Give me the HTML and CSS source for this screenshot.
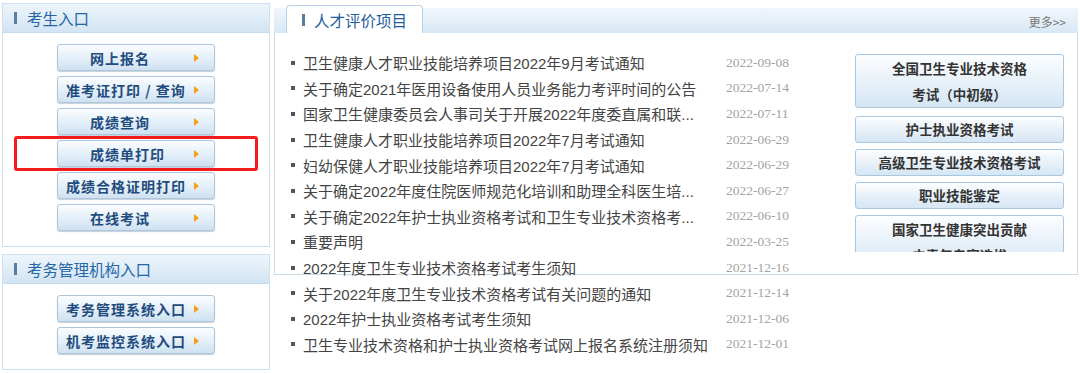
FILE: index.html
```html
<!DOCTYPE html>
<html lang="zh-CN">
<head>
<meta charset="utf-8">
<title>人才评价项目</title>
<link rel="stylesheet" href="styles.css">
</head>
<body>
<div class="page">
  <aside class="side">
    <section class="box box-exam">
      <h2 class="box-head"><span class="mark"></span>考生入口</h2>
      <div class="box-body">
        <a class="btn">网上报名<i class="arr"></i></a>
        <a class="btn btn-wide">准考证打印 / 查询<i class="arr"></i></a>
        <a class="btn">成绩查询<i class="arr"></i></a>
        <a class="btn btn-marked">成绩单打印<i class="arr"></i></a>
        <a class="btn btn-wide">成绩合格证明打印<i class="arr"></i></a>
        <a class="btn">在线考试<i class="arr"></i></a>
      </div>
    </section>
    <section class="box box-org">
      <h2 class="box-head"><span class="mark"></span>考务管理机构入口</h2>
      <div class="box-body">
        <a class="btn btn-wide">考务管理系统入口<i class="arr"></i></a>
        <a class="btn btn-wide">机考监控系统入口<i class="arr"></i></a>
      </div>
    </section>
  </aside>
  <main class="main">
    <div class="main-head">
      <div class="tab"><span class="mark"></span>人才评价项目</div>
      <a class="more">更多&gt;&gt;</a>
    </div>
    <div class="main-body">
      <ul class="news">
        <li><span class="title">卫生健康人才职业技能培养项目2022年9月考试通知</span><span class="date">2022-09-08</span></li>
        <li><span class="title">关于确定2021年医用设备使用人员业务能力考评时间的公告</span><span class="date">2022-07-14</span></li>
        <li><span class="title">国家卫生健康委员会人事司关于开展2022年度委直属和联...</span><span class="date">2022-07-11</span></li>
        <li><span class="title">卫生健康人才职业技能培养项目2022年7月考试通知</span><span class="date">2022-06-29</span></li>
        <li><span class="title">妇幼保健人才职业技能培养项目2022年7月考试通知</span><span class="date">2022-06-29</span></li>
        <li><span class="title">关于确定2022年度住院医师规范化培训和助理全科医生培...</span><span class="date">2022-06-27</span></li>
        <li><span class="title">关于确定2022年护士执业资格考试和卫生专业技术资格考...</span><span class="date">2022-06-10</span></li>
        <li><span class="title">重要声明</span><span class="date">2022-03-25</span></li>
        <li><span class="title">2022年度卫生专业技术资格考试考生须知</span><span class="date">2021-12-16</span></li>
        <li><span class="title">关于2022年度卫生专业技术资格考试有关问题的通知</span><span class="date">2021-12-14</span></li>
        <li><span class="title">2022年护士执业资格考试考生须知</span><span class="date">2021-12-06</span></li>
        <li><span class="title">卫生专业技术资格和护士执业资格考试网上报名系统注册须知</span><span class="date">2021-12-01</span></li>
      </ul>
      <div class="quick">
        <a class="qbtn qbtn-two">全国卫生专业技术资格<br>考试（中初级）</a>
        <a class="qbtn">护士执业资格考试</a>
        <a class="qbtn">高级卫生专业技术资格考试</a>
        <a class="qbtn">职业技能鉴定</a>
        <a class="qbtn qbtn-two">国家卫生健康突出贡献<br>中青年专家选拔</a>
      </div>
    </div>
  </main>
</div>
</body>
</html>
```

FILE: styles.css
```css
* {
  box-sizing: border-box;
  margin: 0;
  padding: 0;
}

html, body {
  width: 1080px;
  height: 374px;
  overflow: hidden;
  background: #ffffff;
}

body {
  font-family: "Noto Sans CJK SC", sans-serif;
  color: #333;
}

a {
  text-decoration: none;
  cursor: pointer;
}

.page {
  display: flex;
  align-items: flex-start;
  gap: 4px;
  padding: 3px 2px 0 2px;
}

/* ---------- left column ---------- */
.side {
  width: 268px;
  display: flex;
  flex-direction: column;
  gap: 7px;
}

.box {
  border: 1px solid #cfe0ee;
  background: #fff;
}

.box-head {
  height: 29px;
  display: flex;
  align-items: center;
  padding-left: 11px;
  font-size: 15.5px;
  font-weight: normal;
  color: #2567a6;
  background: linear-gradient(#eef5fb, #d2e4f3);
  border-bottom: 1px solid #c6dbec;
}

.mark {
  display: inline-block;
  width: 3px;
  height: 12px;
  background: #5b7e9f;
  margin-right: 10px;
}

.box-body {
  display: flex;
  flex-direction: column;
  align-items: center;
  gap: 5px;
  padding: 11px 0 15px;
}

.btn {
  position: relative;
  width: 158px;
  height: 27px;
  display: flex;
  align-items: center;
  padding-left: 32px;
  font-size: 14px;
  letter-spacing: 1px;
  font-weight: bold;
  color: #1f4c7d;
  border: 1px solid #aac7de;
  border-radius: 3px;
  background: linear-gradient(#fbfdff 0%, #e7f1fa 45%, #cfe2f2 100%);
  box-shadow: 0 1px 1px rgba(90, 120, 150, 0.35);
  white-space: nowrap;
}

.btn-wide {
  padding-left: 8px;
}

.arr {
  margin-left: auto;
  margin-right: 15px;
  width: 0;
  height: 0;
  border-left: 5px solid #f5a01c;
  border-top: 4px solid transparent;
  border-bottom: 4px solid transparent;
}

/* annotation: red frame drawn over the button */
.btn-marked::after {
  content: "";
  position: absolute;
  top: -5px;
  bottom: -5px;
  left: -44px;
  right: -44px;
  border: 3px solid #f21c1c;
  border-radius: 3px;
}

/* ---------- main panel ---------- */
.main {
  width: 804px;
  margin-top: 2px;
}

.main-head {
  height: 28px;
  padding-top: 3px;
  display: flex;
  align-items: flex-start;
  background: linear-gradient(#f3f8fd, #d8e8f5);
  background-clip: content-box;
}

.tab {
  margin-top: -3px;
  margin-left: 12px;
  width: 137px;
  height: 28px;
  display: flex;
  align-items: center;
  padding-left: 15px;
  background: #fff;
  border: 1px solid #b8d1e6;
  border-bottom: none;
  border-radius: 4px 4px 0 0;
  font-size: 15.5px;
  color: #1d5e9d;
}

.tab .mark {
  margin-right: 9px;
}

.more {
  margin-left: auto;
  margin-right: 12px;
  margin-top: 5px;
  font-size: 12px;
  color: #777;
}

.main-body {
  height: 242px;
  display: flex;
  align-items: flex-start;
  padding: 17px 13px 0 16px;
  border: 1px solid #c8dcec;
  border-top: none;
}

.news {
  list-style: none;
  width: 520px;
  flex: none;
}

.news li {
  display: flex;
  align-items: center;
  height: 25.6px;
  white-space: nowrap;
}

.news li::before {
  content: "";
  width: 4px;
  height: 4px;
  background: #555;
  margin-right: 8px;
  flex: none;
}

.title {
  width: 423px;
  flex: none;
  font-family: "Liberation Sans", "Noto Sans CJK SC", sans-serif;
  font-size: 15px;
  color: #444;
}

.date {
  font-family: "Liberation Serif", serif;
  font-size: 13.5px;
  color: #a3a3a3;
}

.quick {
  margin-left: auto;
  margin-top: 4px;
  width: 209px;
  height: 198px;
  overflow: hidden;
  display: flex;
  flex-direction: column;
  gap: 6px;
  flex: none;
}

.qbtn {
  display: block;
  flex: none;
  text-align: center;
  font-size: 13.5px;
  font-weight: bold;
  color: #333;
  line-height: 25px;
  border: 1px solid #a9c7df;
  border-radius: 3px;
  background: linear-gradient(#fdfeff 0%, #e8f1f9 50%, #d5e6f4 100%);
}

.qbtn-two {
  line-height: 26px;
}

.qbtn-two:first-child {
  margin-bottom: 2px;
}
```
